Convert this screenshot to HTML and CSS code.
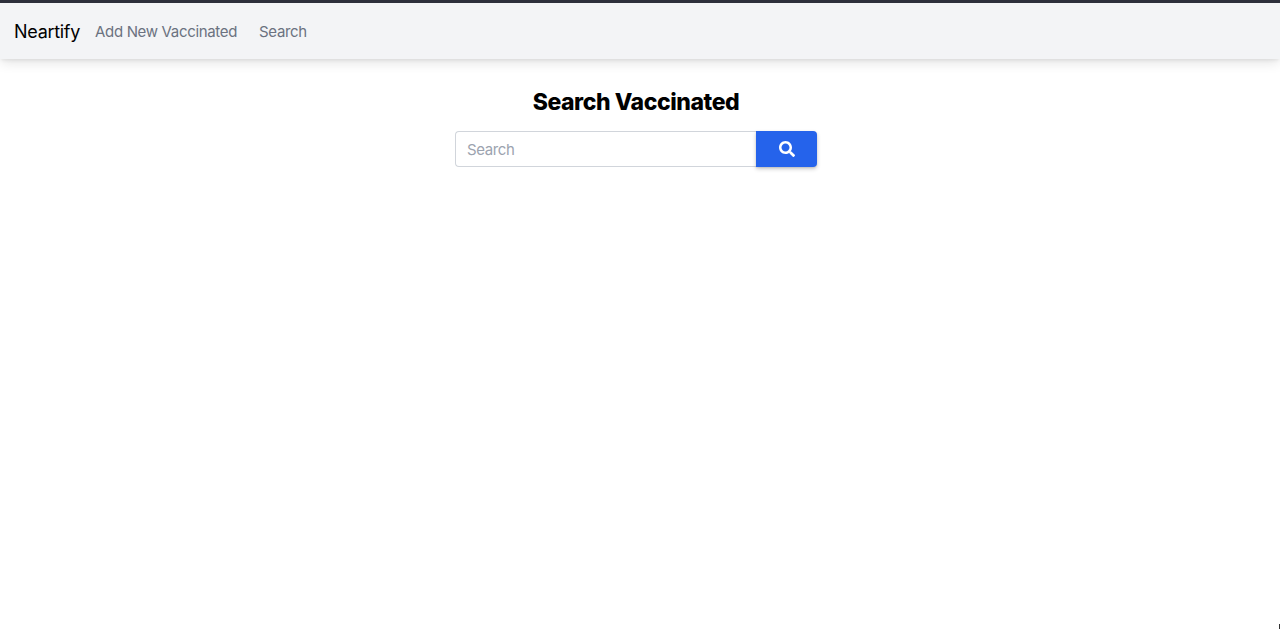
FILE: index.html
```html
<!DOCTYPE html>
<html lang="en">

<head>
    <meta charset="UTF-8">
    <meta name="viewport" content="width=device-width, initial-scale=1.0">
    <title>Neartify</title>

    <link rel="stylesheet" href="styles.css">

</head>

<body>
    <nav class="navbar">
        <a class="brand" href="#">Neartify</a>
        <a class="navLink" href="#">Add New Vaccinated</a>
        <a class="navLink" href="#">Search</a>
    </nav>

    <main class="ctr">
        <h1 class="title">Search Vaccinated</h1>
        <form class="searchForm">
            <input class="searchInput" type="text" placeholder="Search">
            <button class="searchBtn" type="button" aria-label="Search">
                <svg class="searchIcon" viewBox="0 0 512 512" width="16" height="16">
                    <path fill="#fff" d="M505 442.700L405.300 343c-4.500-4.500-10.600-7-17-7H372c27.600-35.300 44-79.700 44-128C416 93.100 322.900 0 208 0S0 93.100 0 208s93.100 208 208 208c48.300 0 92.700-16.400 128-44v16.300c0 6.400 2.500 12.500 7 17l99.700 99.700c9.400 9.400 24.600 9.400 33.900 0l28.300-28.300c9.400-9.400 9.400-24.600.1-34zM208 336c-70.700 0-128-57.200-128-128 0-70.700 57.200-128 128-128 70.700 0 128 57.200 128 128 0 70.700-57.200 128-128 128z"/>
                </svg>
            </button>
        </form>
    </main>

    <div class="cornerMark"></div>
</body>

</html>
```

FILE: styles.css
```css
* {
    box-sizing: border-box;
    margin: 0;
    padding: 0;
}

html,
body {
    height: 100%;
}

body {
    font-family: Inter, "Liberation Sans", sans-serif;
    background-color: #fff;
    overflow: hidden;
}

a {
    text-decoration: none;
}

.navbar {
    display: flex;
    align-items: center;
    height: 59px;
    padding: 0 14px;
    border-top: 3px solid #2d2f3b;
    background-color: #f3f4f6;
    box-shadow: 0 4px 12px -1px rgba(0, 0, 0, 0.12), 0 2px 4px -1px rgba(0, 0, 0, 0.08);
}

.brand {
    margin-right: 15px;
    font-size: 18px;
    letter-spacing: -0.3px;
    color: #000;
}

.navLink {
    margin-right: 22px;
    font-size: 15px;
    letter-spacing: -0.33px;
    color: #6b7280;
}

.ctr {
    display: flex;
    flex-direction: column;
    align-items: center;
    padding-top: 27px;
    padding-right: 8px;
}

.title {
    margin-bottom: 13px;
    font-size: 23px;
    line-height: 32px;
    font-weight: 800;
    letter-spacing: -0.43px;
    color: #000;
}

.searchForm {
    display: flex;
    width: 362px;
    height: 36px;
}

.searchInput {
    flex: 1;
    min-width: 0;
    padding: 0 11px;
    font-family: inherit;
    font-size: 15px;
    letter-spacing: -0.4px;
    color: #374151;
    border: 1px solid #d1d5db;
    border-right: 0;
    border-radius: 4px 0 0 4px;
    outline: none;
}

.searchInput::placeholder {
    color: #9ca3af;
}

.searchBtn {
    display: flex;
    align-items: center;
    justify-content: center;
    width: 61px;
    background-color: #2563eb;
    border: 0;
    border-radius: 0 4px 4px 0;
    box-shadow: 0 2px 4px rgba(0, 0, 0, 0.2), 0 1px 2px rgba(0, 0, 0, 0.1);
}

/* dark sliver in the bottom right corner of the shot */
.cornerMark {
    position: fixed;
    right: 0;
    bottom: 0;
    width: 1px;
    height: 5px;
    background-color: #333;
}
```
